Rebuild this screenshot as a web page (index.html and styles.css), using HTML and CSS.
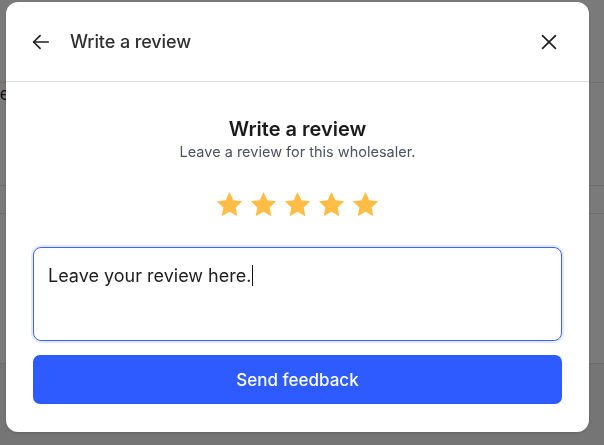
FILE: index.html
```html
<!DOCTYPE html>
<html lang="en">
<head>
  <meta charset="UTF-8" />
  <meta name="viewport" content="width=device-width, initial-scale=1.0"/>
  <title>Write a review</title>
  <link rel="stylesheet" href="styles.css">
</head>
<body>
  <div class="page">
    <div class="page-row page-head"></div>
    <div class="page-row page-a"><span class="page-label">Wholesale</span></div>
    <div class="page-row page-b"></div>
    <div class="page-row page-c"></div>
  </div>

  <div class="overlay">
    <div class="modal">
      <div class="modal-header">
        <button class="icon-btn back" aria-label="Back">
          <svg width="22" height="22" viewBox="0 0 24 24" fill="none" stroke="#1f1f1f" stroke-width="1.8" stroke-linecap="round" stroke-linejoin="round"><path d="M20 12H4"/><path d="M11 5l-7 7 7 7"/></svg>
        </button>
        <span class="modal-title">Write a review</span>
        <button class="icon-btn close" aria-label="Close">
          <svg width="22" height="22" viewBox="0 0 24 24" fill="none" stroke="#1f1f1f" stroke-width="1.8" stroke-linecap="round"><path d="M5 5l14 14"/><path d="M19 5L5 19"/></svg>
        </button>
      </div>

      <div class="modal-body">
        <h3>Write a review</h3>
        <p class="sub">Leave a review for this wholesaler.</p>

        <div class="stars">
          <svg viewBox="0 0 24 24"><path d="M12 1.6l3.2 6.8 7.3.9-5.4 5.1 1.4 7.3L12 18.1l-6.5 3.6 1.4-7.3-5.4-5.1 7.3-.9z"/></svg>
          <svg viewBox="0 0 24 24"><path d="M12 1.6l3.2 6.8 7.3.9-5.4 5.1 1.4 7.3L12 18.1l-6.5 3.6 1.4-7.3-5.4-5.1 7.3-.9z"/></svg>
          <svg viewBox="0 0 24 24"><path d="M12 1.6l3.2 6.8 7.3.9-5.4 5.1 1.4 7.3L12 18.1l-6.5 3.6 1.4-7.3-5.4-5.1 7.3-.9z"/></svg>
          <svg viewBox="0 0 24 24"><path d="M12 1.6l3.2 6.8 7.3.9-5.4 5.1 1.4 7.3L12 18.1l-6.5 3.6 1.4-7.3-5.4-5.1 7.3-.9z"/></svg>
          <svg viewBox="0 0 24 24"><path d="M12 1.6l3.2 6.8 7.3.9-5.4 5.1 1.4 7.3L12 18.1l-6.5 3.6 1.4-7.3-5.4-5.1 7.3-.9z"/></svg>
        </div>

        <div class="review-box">Leave your review here.<span class="caret"></span></div>

        <button class="send">Send feedback</button>
      </div>
    </div>
  </div>
</body>
</html>
```

FILE: styles.css
```css
html, body { margin: 0; height: 100%; }
body { font-family: Inter, "Noto Sans", Arial, sans-serif; background: #f5f5f5; overflow: hidden; }

.page { height: 100%; }
.page-row { border-bottom: 1px solid #e2e2e2; background: #fff; }
.page-head { height: 82px; }
.page-a { height: 102px; }
.page-label { display: block; margin-left: -74px; padding-top: 1px; font-size: 17px; line-height: 20px; color: #222; white-space: nowrap; }
.page-b { height: 27px; }
.page-c { height: 149px; }

.overlay { position: fixed; inset: 0; background: rgba(0, 0, 0, 0.52); }
.modal { position: absolute; left: 6px; top: 2px; width: 583px; height: 430px; background: #fff; border-radius: 12px; box-shadow: 0 1px 3px rgba(0,0,0,0.2); display: flex; flex-direction: column; }

.modal-header { height: 79px; display: flex; align-items: center; padding: 0 22px; border-bottom: 1px solid #dcdcdc; }
.icon-btn { background: none; border: none; padding: 0; width: 26px; height: 26px; display: flex; align-items: center; justify-content: center; cursor: pointer; }
.back { margin-right: 16px; }
.close { margin-left: auto; margin-right: 5px; }
.modal-title { font-size: 18px; font-weight: 500; color: #303030; letter-spacing: -0.1px; }

.modal-body { padding: 35px 27px 0; display: flex; flex-direction: column; align-items: center; }
.modal-body h3 { margin: 0; font-size: 20px; font-weight: 600; color: #1b1b1b; line-height: 24px; }
.sub { margin: 2px 0 0; font-size: 14.5px; color: #4d5260; line-height: 18px; }

.stars { display: flex; gap: 5px; margin-top: 29px; }
.stars svg { width: 29px; height: 29px; fill: #ffbd45; }

.review-box { align-self: stretch; margin-top: 28px; height: 94px; box-sizing: border-box; border: 1.5px solid #3d63ff; border-radius: 8px; box-shadow: 0 0 0 2px #e3e9ff; padding: 16px 14px; font-size: 18px; color: #1e1e1e; line-height: 24px; }
.caret { display: inline-block; width: 1px; height: 21px; background: #111; vertical-align: -4px; margin-left: 1px; }

.send { align-self: stretch; margin-top: 14px; height: 49px; border: none; border-radius: 7px; background: #2d5bff; color: #fff; font-family: inherit; font-size: 17px; font-weight: 500; cursor: pointer; }
.send:hover { background: #244ee6; }
```
